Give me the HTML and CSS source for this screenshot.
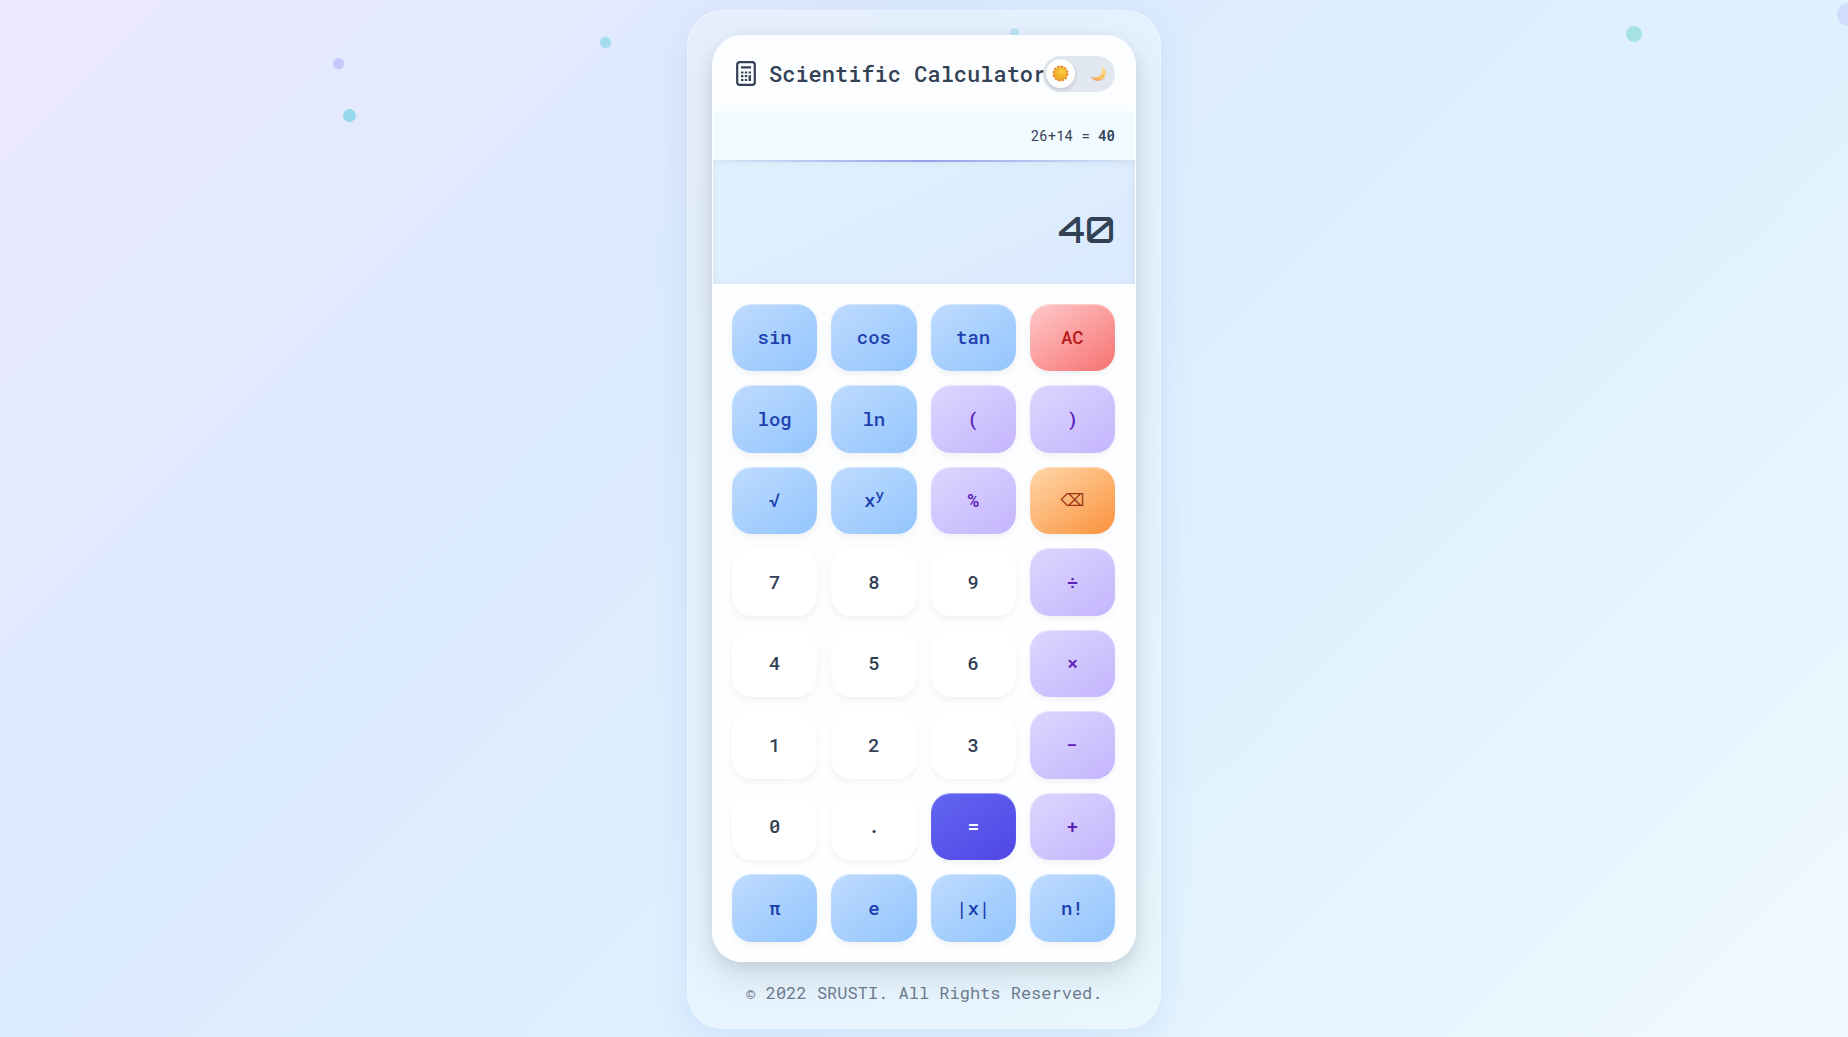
FILE: index.html
```html
<!DOCTYPE html>
<html lang="en">
<head>
<meta charset="utf-8">
<meta name="viewport" content="width=device-width, initial-scale=1">
<title>Scientific Calculator</title>
<link rel="stylesheet" href="styles.css">
</head>
<body>
<div class="particles" aria-hidden="true">
  <span class="dot dot-1"></span>
  <span class="dot dot-2"></span>
  <span class="dot dot-3"></span>
  <span class="dot dot-4"></span>
  <span class="dot dot-5"></span>
  <span class="dot dot-6"></span>
</div>
<div class="container">
  <main class="calculator">
    <header class="header">
      <h1 class="title">
        <svg class="title-icon" viewBox="0 0 20 25" aria-hidden="true">
          <rect x="1.2" y="1.2" width="17.6" height="22.6" rx="2.6" fill="none" stroke="currentColor" stroke-width="2.2"/>
          <path d="M5 6.400h10" stroke="currentColor" stroke-width="2.400"/>
          <path d="M5 11.500h2.400M8.800 11.500h2.400M12.600 11.500h2.400M5 15.200h2.400M8.800 15.200h2.400M5 19h2.400M8.800 19h2.400" stroke="currentColor" stroke-width="2.200"/>
          <path d="M13.800 14.200v5.900" stroke="currentColor" stroke-width="2.400"/>
        </svg>
        <span>Scientific Calculator</span>
      </h1>
      <label class="switch">
        <input class="switch-input" type="checkbox" aria-label="Dark theme">
        <span class="knob">
          <svg class="sun" viewBox="0 0 18 18" aria-hidden="true">
            <defs><radialGradient id="sunFill" cx=".6" cy=".3" r=".75"><stop offset="0" stop-color="#f8cf3c"/><stop offset="1" stop-color="#efa31f"/></radialGradient></defs>
            <circle cx="9" cy="9" r="7.300" fill="none" stroke="#e88a30" stroke-width="2.400" stroke-dasharray="2.600 1.222"/>
            <circle cx="9" cy="9" r="7" fill="url(#sunFill)" stroke="#e8973a" stroke-width=".8"/>
          </svg>
        </span>
        <svg class="moon" viewBox="0 0 18 18" aria-hidden="true">
          <defs><linearGradient id="moonFill" x1="1" y1="0" x2="0" y2="1"><stop offset="0" stop-color="#ffe59a"/><stop offset=".55" stop-color="#fccb70"/><stop offset="1" stop-color="#ef9a5b"/></linearGradient></defs>
          <path d="M12.800 1C16.900 4.300 18.200 9.500 15.300 13.300C12 17.700 4.600 17.700 1 12.600C5.200 14 9.500 12.700 11.500 9.400C13.100 6.700 13.300 3.700 12.800 1Z" fill="url(#moonFill)"/>
          <path d="M1 12.600C5 17.700 11.800 17.500 15.300 13.300" fill="none" stroke="#e9985f" stroke-width=".7"/>
          <circle cx="13.600" cy="11.300" r="1" fill="#f0a55e"/><circle cx="9" cy="14.500" r=".9" fill="#e9985f"/><circle cx="15" cy="7" r=".6" fill="#f0b55e"/>
        </svg>
      </label>
    </header>
    <div class="history">26+14 = <strong>40</strong></div>
    <output class="display">40</output>
    <div class="keys">
      <button class="key fn" type="button">sin</button>
      <button class="key fn" type="button">cos</button>
      <button class="key fn" type="button">tan</button>
      <button class="key clear" type="button">AC</button>
      <button class="key fn" type="button">log</button>
      <button class="key fn" type="button">ln</button>
      <button class="key op" type="button">(</button>
      <button class="key op" type="button">)</button>
      <button class="key fn" type="button">√</button>
      <button class="key fn" type="button"><span>x<sup>y</sup></span></button>
      <button class="key op" type="button">%</button>
      <button class="key back" type="button" aria-label="Backspace">⌫</button>
      <button class="key" type="button">7</button>
      <button class="key" type="button">8</button>
      <button class="key" type="button">9</button>
      <button class="key op" type="button">÷</button>
      <button class="key" type="button">4</button>
      <button class="key" type="button">5</button>
      <button class="key" type="button">6</button>
      <button class="key op" type="button">×</button>
      <button class="key" type="button">1</button>
      <button class="key" type="button">2</button>
      <button class="key" type="button">3</button>
      <button class="key op" type="button">−</button>
      <button class="key" type="button">0</button>
      <button class="key" type="button">.</button>
      <button class="key equals" type="button">=</button>
      <button class="key op" type="button">+</button>
      <button class="key fn" type="button">π</button>
      <button class="key fn" type="button">e</button>
      <button class="key fn" type="button">|x|</button>
      <button class="key fn" type="button">n!</button>
    </div>
  </main>
  <footer class="footer">© 2022 SRUSTI. All Rights Reserved.</footer>
</div>
</body>
</html>
```
FILE: styles.css
```css
* {
  box-sizing: border-box;
}

body {
  margin: 0;
  min-height: 100vh;
  padding: 10px 0 6px;
  position: relative;
  overflow-x: hidden;
  font-family: "Roboto Mono", "Liberation Mono", monospace;
  color: #334155;
  background: linear-gradient(135deg, #ede9fe 0%, #dbeafe 32%, #e0f2fe 68%, #f0f9ff 100%);
}

.particles {
  position: absolute;
  inset: 0;
  overflow: hidden;
}

.dot {
  position: absolute;
  border-radius: 50%;
}

.dot-1 { left: 333px; top: 58px; width: 11px; height: 11px; background: #c7c8fa; }
.dot-2 { left: 343px; top: 109px; width: 13px; height: 13px; background: #98d8ee; }
.dot-3 { left: 600px; top: 37px; width: 11px; height: 11px; background: #a5dbf0; }
.dot-4 { left: 1010px; top: 28px; width: 9px; height: 9px; background: #a8dbf3; }
.dot-5 { left: 1626px; top: 26px; width: 16px; height: 16px; background: #a7e2e2; }
.dot-6 { left: 1837px; top: 3px; width: 23px; height: 23px; background: #cfdcfb; }

.container {
  position: relative;
  width: 100%;
  max-width: 474px;
  margin: 0 auto;
  padding: 24px;
  border: 1px solid rgba(255, 255, 255, 0.3);
  border-radius: 36px;
  background: rgba(255, 255, 255, 0.25);
  box-shadow: 0 8px 32px rgba(99, 132, 220, 0.15);
}

.calculator {
  border: 1px solid #fcfeff;
  border-radius: 30px;
  overflow: hidden;
  background: rgba(255, 255, 255, 0.85);
  box-shadow: 0 15px 35px rgba(0, 0, 0, 0.1), 0 5px 15px rgba(0, 0, 0, 0.07);
}

.header {
  display: flex;
  align-items: center;
  justify-content: space-between;
  min-height: 75px;
  padding: 0 20px 0 23px;
}

.title {
  display: flex;
  align-items: center;
  gap: 13px;
  min-width: 0;
  margin: 0;
  font-size: 22px;
  font-weight: 500;
  line-height: 28px;
  white-space: nowrap;
}

.title-icon {
  flex-shrink: 0;
  width: 20px;
  height: 25px;
}

.switch {
  display: flex;
  align-items: center;
  justify-content: space-between;
  position: relative;
  flex-shrink: 0;
  width: 72px;
  height: 36px;
  padding: 0 8px 0 3px;
  border-radius: 18px;
  background: #e2e8f0;
  cursor: pointer;
}

.switch-input {
  position: absolute;
  inset: 0;
  margin: 0;
  opacity: 0;
}

.knob {
  display: grid;
  place-items: center;
  width: 29px;
  height: 29px;
  border-radius: 50%;
  background: #fff;
  box-shadow: 0 2px 5px rgba(0, 0, 0, 0.15);
}

.sun,
.moon {
  width: 17px;
  height: 17px;
}

.history {
  height: 49px;
  padding: 0 20px;
  font-size: 14px;
  line-height: 49px;
  text-align: right;
  background: rgba(224, 244, 254, 0.35);
}

.history strong {
  font-weight: 600;
}

.display {
  display: flex;
  align-items: center;
  justify-content: flex-end;
  height: 124px;
  padding: 16px 20px 0;
  font-family: Orbitron, Inter, sans-serif;
  font-size: 36px;
  font-weight: 500;
  line-height: 48px;
  background:
    linear-gradient(90deg, rgba(79, 70, 229, 0), rgba(79, 70, 229, 0.45), rgba(79, 70, 229, 0)) top / 100% 2px no-repeat,
    linear-gradient(155deg, #e0f2fe, #dbeafe);
  box-shadow: inset 0 2px 8px rgba(0, 0, 0, 0.06);
}

.keys {
  display: grid;
  grid-template-columns: repeat(4, 1fr);
  gap: 14px;
  padding: 20px 20px 19px 19px;
}

.key {
  display: grid;
  place-items: center;
  aspect-ratio: 24 / 19;
  min-width: 0;
  margin: 0;
  padding: 0 0 1px;
  border: 0;
  border-radius: 20px;
  font-family: inherit;
  font-size: 19px;
  font-weight: 500;
  line-height: 24px;
  color: #334155;
  background: #fff;
  box-shadow: 0 3px 6px rgba(0, 0, 0, 0.05), inset 0 1px 1px rgba(255, 255, 255, 0.4);
  cursor: pointer;
}

.key sup {
  font-size: 14px;
  line-height: 0;
}

.fn {
  color: #1e40af;
  background: linear-gradient(145deg, #bfdbfe, #93c5fd);
}

.op {
  color: #5b21b6;
  background: linear-gradient(145deg, #ddd6fe, #c4b5fd);
}

.clear {
  color: #b91c1c;
  background: linear-gradient(145deg, #fecaca, #f87171);
}

.back {
  font-family: "DejaVu Sans", sans-serif;
  font-size: 17px;
  color: #9a3412;
  background: linear-gradient(145deg, #fed7aa, #fb923c);
}

.equals {
  color: #fff;
  font-weight: 700;
  background: linear-gradient(145deg, #6366f1, #4f46e5);
}

.footer {
  margin-top: 20px;
  font-size: 17px;
  line-height: 22px;
  text-align: center;
  color: #6b7a8d;
}
```
